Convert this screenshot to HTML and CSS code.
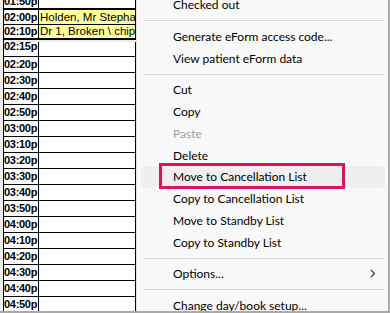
FILE: index.html
```html
<!DOCTYPE html>
<html lang="en">
<head>
    <meta charset="UTF-8">
    <meta name="viewport" content="width=device-width, initial-scale=1.0">
    <title>Appointment book</title>
    <link rel="stylesheet" href="styles.css">
</head>
<body>
    <div class="screen">
        <div class="book">
            <div class="row first"><div class="time"><span>01:50p</span></div><div class="name"></div></div>
            <div class="row booked"><div class="time">02:00p</div><div class="name">Holden, Mr Stephanie</div></div>
            <div class="row booked last"><div class="time">02:10p</div><div class="name">Dr 1, Broken \ chipped tooth</div></div>
            <div class="split"></div>
            <div class="row cut"><div class="time"><span>02:15p</span></div><div class="name"></div></div>
            <div class="row"><div class="time">02:20p</div><div class="name"></div></div>
            <div class="row"><div class="time">02:30p</div><div class="name"></div></div>
            <div class="row"><div class="time">02:40p</div><div class="name"></div></div>
            <div class="row"><div class="time">02:50p</div><div class="name"></div></div>
            <div class="row"><div class="time">03:00p</div><div class="name"></div></div>
            <div class="row"><div class="time">03:10p</div><div class="name"></div></div>
            <div class="row"><div class="time">03:20p</div><div class="name"></div></div>
            <div class="row"><div class="time">03:30p</div><div class="name"></div></div>
            <div class="row"><div class="time">03:40p</div><div class="name"></div></div>
            <div class="row"><div class="time">03:50p</div><div class="name"></div></div>
            <div class="row"><div class="time">04:00p</div><div class="name"></div></div>
            <div class="row"><div class="time">04:10p</div><div class="name"></div></div>
            <div class="row"><div class="time">04:20p</div><div class="name"></div></div>
            <div class="row"><div class="time">04:30p</div><div class="name"></div></div>
            <div class="row"><div class="time">04:40p</div><div class="name"></div></div>
            <div class="row"><div class="time">04:50p</div><div class="name"></div></div>
        </div>

        <div class="menu">
            <div class="item top">Checked out</div>
            <div class="sep"></div>
            <div class="item">Generate eForm access code...</div>
            <div class="item">View patient eForm data</div>
            <div class="sep"></div>
            <div class="item">Cut</div>
            <div class="item">Copy</div>
            <div class="item disabled">Paste</div>
            <div class="item">Delete</div>
            <div class="item active">Move to Cancellation List<span class="mark"></span></div>
            <div class="item">Copy to Cancellation List</div>
            <div class="item">Move to Standby List</div>
            <div class="item">Copy to Standby List</div>
            <div class="sep"></div>
            <div class="item"><span class="label">Options...</span>
                <svg class="arrow" width="6" height="9" viewBox="0 0 6 9"><polyline points="1,1 4.5,4.5 1,8" fill="none" stroke="#333" stroke-width="1.1"/></svg>
            </div>
            <div class="sep"></div>
            <div class="item">Change day/book setup...</div>
        </div>
    </div>
</body>
</html>
```

FILE: styles.css
```css
* {
    box-sizing: border-box;
}
body {
    margin: 0;
    font-family: "Liberation Sans", Arial, sans-serif;
    background-color: #f0f0f0;
}
.screen {
    display: flex;
    width: 390px;
    height: 313px;
    overflow: hidden;
    background-color: #f0f0f0;
    border-right: 2px solid #a9a9a9;
    border-bottom: 2px solid #a9a9a9;
}
.book {
    width: 133px;
    margin-left: 3px;
    border-left: 1px solid #000;
    display: flex;
    flex-direction: column;
    flex: none;
}
.row {
    display: flex;
    flex: none;
    height: 16px;
    line-height: 15px;
    background-color: #fff;
    border-bottom: 1px solid #000;
}
.row.first {
    height: 10px;
    border-bottom: 2px solid #000;
}
.row.first .time span {
    display: block;
    margin-top: -6px;
    line-height: 14px;
}
.row.booked {
    height: 15px;
    line-height: 14px;
}
.row.booked.last {
    line-height: 13px;
    border-bottom: 2px solid #000;
}
.row.booked .name {
    background-color: #ffff9c;
}
.split {
    height: 2px;
    flex: none;
    background-color: #ebebeb;
}
.row.cut {
    height: 15px;
}
.row.cut .time span {
    display: block;
    margin-top: -3px;
}
.time {
    width: 35px;
    border-right: 1px solid #000;
    font-size: 11px;
    font-weight: bold;
    letter-spacing: -0.3px;
    color: #000;
    overflow: hidden;
    white-space: nowrap;
}
.name {
    width: 97px;
    padding-left: 1px;
    border-right: 1px solid #000;
    font-size: 11.5px;
    color: #000;
    overflow: hidden;
    white-space: nowrap;
}
.menu {
    flex: 1;
    background-color: #f9f9f9;
    border-left: 1px solid #e2e2e2;
    font-family: "Lato", "Noto Sans", sans-serif;
    font-size: 12px;
    color: #000;
}
.item {
    position: relative;
    display: flex;
    align-items: center;
    height: 21.75px;
    margin: 0 3px 0 4px;
    padding-left: 32px;
    border-radius: 4px;
    white-space: nowrap;
}
.item.top {
    margin-top: -6.2px;
}
.item.disabled {
    color: #a3a3a3;
}
.item.active {
    background-color: #efefef;
}
.label {
    flex: 1;
}
.arrow {
    margin-right: 9px;
}
.sep {
    height: 1px;
    margin: 4.5px 4px 4.5px 7px;
    background-color: #d8d8d8;
}
.mark {
    position: absolute;
    left: 18px;
    top: -3px;
    width: 186px;
    height: 26px;
    border: 3px solid #d6185c;
}
```
